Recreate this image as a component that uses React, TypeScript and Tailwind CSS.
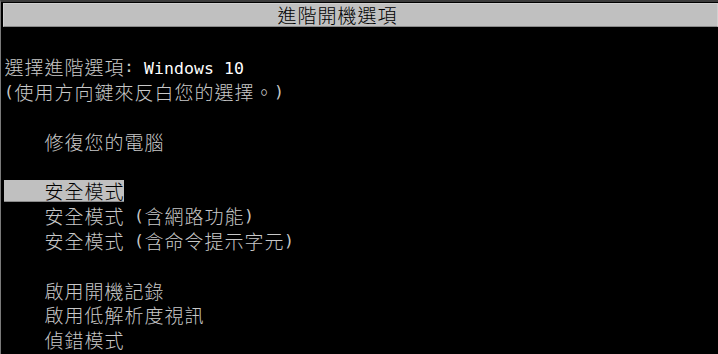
import React from "react";

const cjk = '"Noto Sans CJK TC", "Noto Sans CJK SC", sans-serif';

const isWide = (c: string) => c.charCodeAt(0) > 0x2e7f;

function Cells({ text }: { text: string }) {
  return (
    <>
      {[...text].map((c, i) =>
        isWide(c) ? (
          <span
            key={i}
            className="inline-block w-[20px] text-center text-[19px] leading-[22px] font-light font-['Noto_Sans_CJK_TC',sans-serif]"
          >
            {c}
          </span>
        ) : (
          <span
            key={i}
            className="inline-block w-[10px] text-center text-[16.5px] leading-[22px] font-['DejaVu_Sans_Mono','Noto_Sans_CJK_TC',monospace]"
          >
            {c === " " ? "\u00a0" : c}
          </span>
        )
      )}
    </>
  );
}

type Row = { text: string; extra?: string; selected?: boolean } | null;

const rows: Row[] = [
  { text: "選擇進階選項: ", extra: "Windows 10" },
  { text: "(使用方向鍵來反白您的選擇。)" },
  null,
  { text: "    修復您的電腦" },
  null,
  { text: "    安全模式", selected: true },
  { text: "    安全模式 (含網路功能)" },
  { text: "    安全模式 (含命令提示字元)" },
  null,
  { text: "    啟用開機記錄" },
  { text: "    啟用低解析度視訊" },
  { text: "    偵錯模式" },
];

export default function App() {
  return (
    <div
      className="w-[718px] h-[354px] overflow-hidden bg-black border-l border-l-[#7a7a7a] border-t-2 border-t-[#3c3c3c]"
      style={{ fontFamily: cjk }}
    >
      <div className="ml-[2px] mt-[1px] h-[24px] bg-[#c0c0c0] border border-[#d0d0d0] border-b-[#8a8a8a] flex items-center pl-[273px] text-black">
        <Cells text="進階開機選項" />
      </div>
      <div className="mt-[28px] pl-[3px] flex flex-col text-[#c8c8c8]">
        {rows.map((r, i) => (
          <div key={i} className="h-[24.8px] flex items-center whitespace-nowrap">
            {r &&
              (r.selected ? (
                <span className="inline-flex items-center h-[22px] bg-[#c0c0c0] text-black border-b border-b-[#8a8a8a]">
                  <Cells text={r.text} />
                </span>
              ) : (
                <span className="inline-flex items-center h-[22px]">
                  <Cells text={r.text} />
                  {r.extra && (
                    <span className="text-white">
                      <Cells text={r.extra} />
                    </span>
                  )}
                </span>
              ))}
          </div>
        ))}
      </div>
    </div>
  );
}
